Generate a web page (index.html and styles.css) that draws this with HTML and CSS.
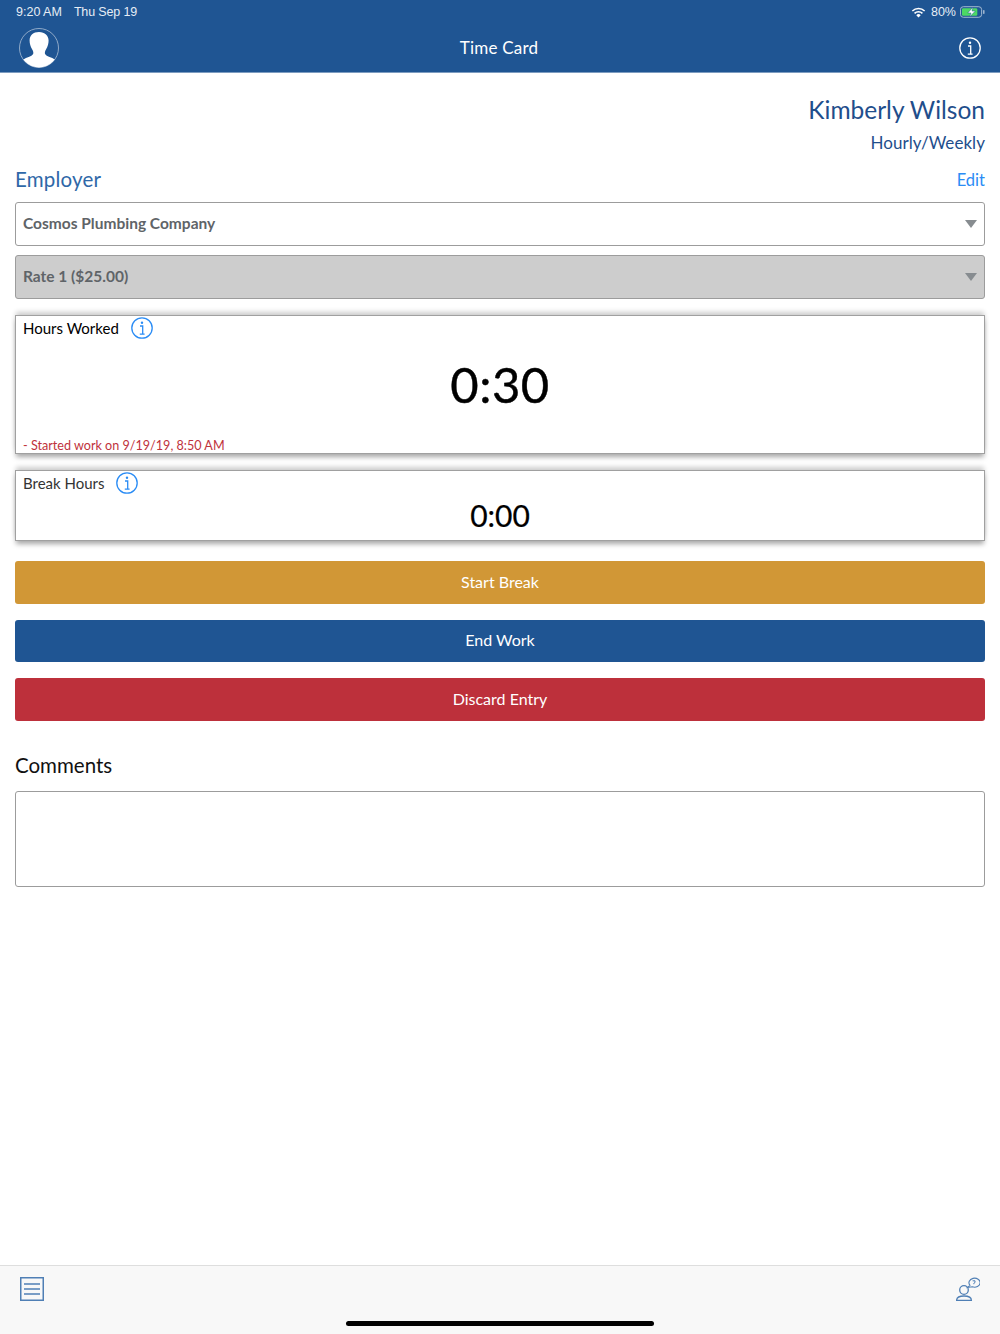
FILE: index.html
```html
<!DOCTYPE html>
<html lang="en">
<head>
<meta charset="utf-8">
<title>Time Card</title>
<link rel="stylesheet" href="styles.css">
</head>
<body>
<div class="app">
  <header class="header">
    <div class="status">
      <div class="status-left"><span>9:20 AM</span><span class="status-date">Thu Sep 19</span></div>
      <div class="status-right">
        <svg class="wifi" viewBox="0 0 16 12" width="15" height="11"><path d="M8 11.500 5.600 8.900a3.400 3.400 0 0 1 4.800 0Z" fill="#fff"/><path d="M3.700 7a6 6 0 0 1 8.600 0" fill="none" stroke="#fff" stroke-width="1.700"/><path d="M1.300 4.400a9.600 9.600 0 0 1 13.400 0" fill="none" stroke="#fff" stroke-width="1.700"/></svg>
        <span>80%</span>
        <svg class="battery" viewBox="0 0 26 12" width="25" height="12"><rect x=".5" y=".5" width="22" height="11" rx="3" fill="none" stroke="#a9bdd4"/><rect x="2" y="2" width="16" height="8" rx="1.500" fill="#4cd964"/><path d="M13.500 1 8 7h3.500L10 11l6-6h-3.500Z" fill="#fff" stroke="#1f5593" stroke-width=".5"/><rect x="24" y="4" width="1.500" height="4" rx=".7" fill="#a9bdd4"/></svg>
      </div>
    </div>
    <div class="navbar">
      <svg class="avatar" viewBox="0 0 40 40" width="40" height="40">
        <defs><clipPath id="avatarClip"><circle cx="20" cy="20" r="19.500"/></clipPath></defs>
        <circle cx="20" cy="20" r="19.500" fill="none" stroke="#8fa9c8" stroke-width="1"/>
        <g clip-path="url(#avatarClip)"><path d="M20 4c5.900 0 9.600 3.700 9.600 8.500 0 3-.9 6.200-2.500 8.700-1 1.600-1.500 3-1.100 4.500.5 1.600 2.500 2.600 5.200 3.600 3 1.100 5 2.200 6 4.200V42H3v-8.500c1-2 3-3.100 6-4.200 2.700-1 4.700-2 5.200-3.600.4-1.500-.1-2.900-1.100-4.500-1.600-2.500-2.500-5.700-2.500-8.700C10.400 7.700 14.100 4 20 4Z" fill="#fff"/></g>
      </svg>
      <div class="nav-title">Time Card</div>
      <svg class="nav-info" viewBox="0 0 22 22" width="22" height="22"><circle cx="11" cy="11" r="10.200" fill="none" stroke="#fff" stroke-width="1.300"/><circle cx="11" cy="5.800" r="1.200" fill="#fff"/><path d="M9 9h2.700v8M8.800 17.200h4.800" fill="none" stroke="#fff" stroke-width="1.300"/></svg>
    </div>
  </header>

  <main class="content">
    <div class="person">
      <div class="person-name">Kimberly Wilson</div>
      <div class="person-type">Hourly/Weekly</div>
    </div>
    <div class="employer-row">
      <div class="employer-label">Employer</div>
      <div class="edit">Edit</div>
    </div>
    <div class="select"><span>Cosmos Plumbing Company</span><i class="caret"></i></div>
    <div class="select select-disabled"><span>Rate 1 ($25.00)</span><i class="caret"></i></div>

    <section class="card card-hours">
      <div class="card-head">
        <span class="card-label card-label-dark">Hours Worked</span>
        <svg class="i-icon" viewBox="0 0 22 22" width="22" height="22"><circle cx="11" cy="11" r="10.200" fill="none" stroke="#2a8cf5" stroke-width="1.300"/><circle cx="11" cy="5.800" r="1.200" fill="#2a8cf5"/><path d="M9 9h2.700v8M8.800 17.200h4.800" fill="none" stroke="#2a8cf5" stroke-width="1.300"/></svg>
      </div>
      <div class="time time-big">0:30</div>
      <div class="started">- Started work on 9/19/19, 8:50 AM</div>
    </section>

    <section class="card card-break">
      <div class="card-head">
        <span class="card-label">Break Hours</span>
        <svg class="i-icon" viewBox="0 0 22 22" width="22" height="22"><circle cx="11" cy="11" r="10.200" fill="none" stroke="#2a8cf5" stroke-width="1.300"/><circle cx="11" cy="5.800" r="1.200" fill="#2a8cf5"/><path d="M9 9h2.700v8M8.800 17.200h4.800" fill="none" stroke="#2a8cf5" stroke-width="1.300"/></svg>
      </div>
      <div class="time time-small">0:00</div>
    </section>

    <div class="actions">
      <div class="btn btn-break">Start Break</div>
      <div class="btn btn-end">End Work</div>
      <div class="btn btn-discard">Discard Entry</div>
    </div>

    <div class="comments-label">Comments</div>
    <div class="comments-box"></div>
  </main>

  <footer class="footer">
    <svg viewBox="0 0 24 24" width="24" height="24" class="menu-icon"><rect x=".75" y=".75" width="22.500" height="22.500" fill="none" stroke="#4f7fb5" stroke-width="1.500"/><path d="M4 7h16M4 12h16M4 17h16" stroke="#4f7fb5" stroke-width="1.400"/></svg>
    <svg viewBox="0 0 24 24" width="24" height="24" class="help-icon"><circle cx="8" cy="13" r="4.300" fill="none" stroke="#4f7fb5" stroke-width="1.300"/><path d="M.6 23.400c0-3 3.400-4.400 7.400-4.400s7.400 1.400 7.400 4.400Z" fill="none" stroke="#4f7fb5" stroke-width="1.300"/><path d="M11.500 10.500l2.500-2.200a5.600 4.500 0 1 1 2.300 1.500Z" fill="none" stroke="#4f7fb5" stroke-width="1.100"/><path d="M16.600 3.800h2.400v1.700l-1.200.8v.9" fill="none" stroke="#4f7fb5" stroke-width="1"/></svg>
    <div class="home-bar"></div>
  </footer>
</div>
</body>
</html>
```
FILE: styles.css
```css
* { box-sizing: border-box; }
html, body { margin: 0; padding: 0; }
body { background: #fff; font-family: Lato, "Open Sans", sans-serif; color: #000; }
.app { width: 1000px; height: 1334px; display: flex; flex-direction: column; overflow: hidden; }

.header { background: #1f5593; height: 73px; color: #fff; padding: 0 15px 0 16px; border-bottom: 1px solid #7d9cc0; flex: none; }
.status { height: 24px; display: flex; justify-content: space-between; align-items: center; font: 12.500px "Liberation Sans", Arial, sans-serif; color: #e6edf5; }
.status-left { display: flex; gap: 12px; }
.status-date { letter-spacing: -.15px; }
.status-right { display: flex; align-items: center; gap: 4px; }
.wifi { margin-right: 1px; }
.navbar { height: 48px; display: flex; align-items: center; justify-content: space-between; position: relative; padding: 0 4px 0 3px; }
.nav-title { position: absolute; left: 0; right: 0; text-align: center; font-size: 17px; letter-spacing: .2px; color: #fff; margin-left: -3px; padding-bottom: 2px; }
.avatar, .nav-info { position: relative; }

.content { padding: 0 15px; flex: 1; }
.person { text-align: right; color: #1f4e8c; padding-top: 22px; }
.person-name { font-size: 24.500px; line-height: 30px; }
.person-type { font-size: 17px; line-height: 22px; margin-top: 7px; letter-spacing: .05px; }
.employer-row { display: flex; justify-content: space-between; align-items: center; height: 26px; margin-top: 13px; }
.employer-label { font-size: 20.500px; color: #2f68a8; padding-bottom: 3px; letter-spacing: .2px; }
.edit { font-size: 16.500px; color: #2a8cf5; }

.select { height: 43.500px; border: 1px solid #9c9c9c; border-radius: 3px; margin-top: 9px; padding: 0 7px 0 7px; display: flex; align-items: center; justify-content: space-between; font-size: 15.500px; font-weight: 700; color: #5f6468; }
.select span { padding-bottom: 2px; }
.select + .select { margin-top: 9.500px; }
.select-disabled { background: #cdcdcd; }
.caret { width: 0; height: 0; border-left: 6.500px solid transparent; border-right: 6.500px solid transparent; border-top: 8px solid #878c90; }

.card { border: 1px solid #a0a0a0; box-shadow: 0 4px 5px -1px rgba(0,0,0,.35), 0 -4px 5px -1px rgba(0,0,0,.2); background: #fff; padding: 0 7px; }
.card-hours { height: 139px; margin-top: 16.500px; }
.card-break { height: 71px; margin-top: 16px; }
.card-head { display: flex; align-items: center; height: 24px; }
.card-hours .i-icon { margin-left: 12px; }
.card-break .i-icon { margin-left: 11px; }
.card-label { font-size: 15px; color: #333; }
.card-label-dark { color: #000; }
.time { text-align: center; }
.time-big { font-size: 49px; line-height: 60px; margin-top: 14px; letter-spacing: .5px; -webkit-text-stroke: .4px #000; }
.time-small { font-size: 30px; line-height: 40px; -webkit-text-stroke: .2px #000; }
.started { font-size: 12.600px; color: #c0323c; line-height: 16px; margin-top: 24px; }

.actions { display: flex; flex-direction: column; gap: 16px; margin-top: 20px; }
.btn { height: 42.500px; border-radius: 3px; display: flex; align-items: center; justify-content: center; color: #fff; font-size: 16px; padding-bottom: 2px; }
.btn-break { background: #d19736; }
.btn-end { background: #1f5593; }
.btn-discard { background: #bd303b; }

.comments-label { font-size: 20.500px; line-height: 24px; margin-top: 32px; color: #111; }
.comments-box { height: 95.500px; border: 1px solid #9c9c9c; border-radius: 3px; margin-top: 14.500px; }

.footer { height: 69px; background: #f8f8f8; border-top: 1px solid #dedede; flex: none; display: flex; justify-content: space-between; padding: 11px 20px 0 20px; position: relative; }
.home-bar { position: absolute; left: 346px; bottom: 8px; width: 308px; height: 5px; border-radius: 3px; background: #000; }
```
